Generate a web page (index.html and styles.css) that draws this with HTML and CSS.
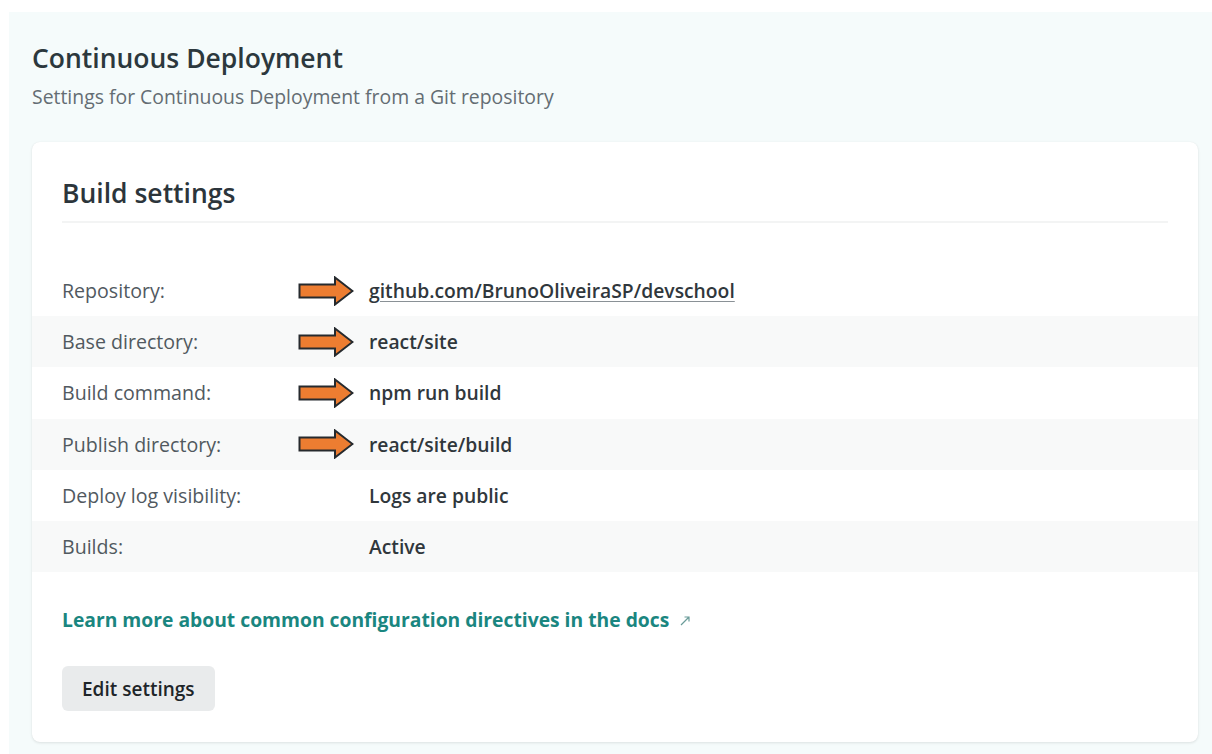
FILE: index.html
```html
<!DOCTYPE html>
<html lang="en">
<head>
<meta charset="utf-8">
<title>Continuous Deployment</title>
<link rel="stylesheet" href="styles.css">
</head>
<body>
<section class="panel">
  <header class="panel-head">
    <h1 class="title">Continuous Deployment</h1>
    <p class="subtitle">Settings for Continuous Deployment from a Git repository</p>
  </header>
  <div class="card">
    <h2 class="card-title">Build settings</h2>
    <dl class="rows">
      <div class="row">
        <dt class="label">Repository:</dt>
        <dd class="mark"><svg class="arrow" viewBox="0 0 56 30" width="56" height="30"><polygon points="1.5,8.5 37,8.5 37,1.5 54.5,15 37,28.5 37,21.5 1.5,21.5" /></svg></dd>
        <dd class="value"><a class="repo" href="#">github.com/BrunoOliveiraSP/devschool</a></dd>
      </div>
      <div class="row striped">
        <dt class="label">Base directory:</dt>
        <dd class="mark"><svg class="arrow" viewBox="0 0 56 30" width="56" height="30"><polygon points="1.5,8.5 37,8.5 37,1.5 54.5,15 37,28.5 37,21.5 1.5,21.5" /></svg></dd>
        <dd class="value">react/site</dd>
      </div>
      <div class="row">
        <dt class="label">Build command:</dt>
        <dd class="mark"><svg class="arrow" viewBox="0 0 56 30" width="56" height="30"><polygon points="1.5,8.5 37,8.5 37,1.5 54.5,15 37,28.5 37,21.5 1.5,21.5" /></svg></dd>
        <dd class="value">npm run build</dd>
      </div>
      <div class="row striped">
        <dt class="label">Publish directory:</dt>
        <dd class="mark"><svg class="arrow" viewBox="0 0 56 30" width="56" height="30"><polygon points="1.5,8.5 37,8.5 37,1.5 54.5,15 37,28.5 37,21.5 1.5,21.5" /></svg></dd>
        <dd class="value">react/site/build</dd>
      </div>
      <div class="row">
        <dt class="label">Deploy log visibility:</dt>
        <dd class="mark"></dd>
        <dd class="value">Logs are public</dd>
      </div>
      <div class="row striped">
        <dt class="label">Builds:</dt>
        <dd class="mark"></dd>
        <dd class="value">Active</dd>
      </div>
    </dl>
    <p class="docs"><a class="docs-link" href="#">Learn more about common configuration directives in the docs</a><svg class="ext" viewBox="0 0 12 12" width="12" height="12"><path d="M2 10 L10 2 M5.5 2 H10 V6.5" /></svg></p>
    <button class="btn" type="button">Edit settings</button>
  </div>
</section>
</body>
</html>
```

FILE: styles.css
```css
* { box-sizing: border-box; }
html, body { margin: 0; padding: 0; }
body {
  background: #ffffff;
  font-family: "Open Sans", "Noto Sans", "Liberation Sans", sans-serif;
  color: #2e363c;
  height: 754px;
  overflow: hidden;
}
.panel {
  margin: 12px 0 0 9px;
  padding: 30px 14px 13px 23px;
  background: #f5fbfb;
}
.title {
  margin: 0;
  font-size: 26.5px;
  line-height: 32px;
  font-weight: 600;
  color: #2c383d;
}
.subtitle {
  margin: 10px 0 0;
  font-size: 19.4px;
  line-height: 26px;
  color: #646d73;
}
.card {
  margin-top: 32px;
  background: #ffffff;
  border-radius: 8px;
  box-shadow: 0 1px 3px rgba(0, 0, 0, 0.10), 0 0 1px rgba(0, 0, 0, 0.06);
  padding: 34px 30px 31px;
}
.card-title {
  margin: 0;
  font-size: 26.5px;
  line-height: 34px;
  font-weight: 600;
  color: #2c353b;
  padding-bottom: 11px;
  border-bottom: 2px solid #f3f4f4;
}
.rows { margin: 42px -30px 0; padding: 0; }
.row {
  display: grid;
  grid-template-columns: 236px 71px auto;
  align-items: center;
  height: 51.2px;
  padding: 0 30px;
}
.row.striped { background: #f8f9f9; }
.label, .mark, .value { margin: 0; }
.label {
  font-size: 19.6px;
  color: #51595f;
}
.mark { height: 30px; }
.arrow polygon {
  fill: #ed7d31;
  stroke: #262a2e;
  stroke-width: 2;
  stroke-linejoin: miter;
}
.value {
  font-size: 19.3px;
  font-weight: 600;
  color: #30373c;
}
.repo {
  color: #30373c;
  text-decoration: underline;
  text-decoration-color: #8a9196;
  text-underline-offset: 3px;
}
.docs {
  margin: 36px 0 0;
  font-size: 19.3px;
  line-height: 24px;
  display: flex;
  align-items: center;
  gap: 10px;
}
.docs-link {
  color: #1a8680;
  font-weight: 700;
  text-decoration: none;
}
.ext { flex: none; margin-top: 1px; }
.ext path { fill: none; stroke: #6a9c99; stroke-width: 1.2; }
.btn {
  margin-top: 34px;
  display: block;
  height: 45px;
  padding: 0 20px;
  border: 0;
  border-radius: 6px;
  background: #e9ebec;
  font-family: inherit;
  font-size: 19px;
  font-weight: 600;
  color: #1e2529;
}
```
